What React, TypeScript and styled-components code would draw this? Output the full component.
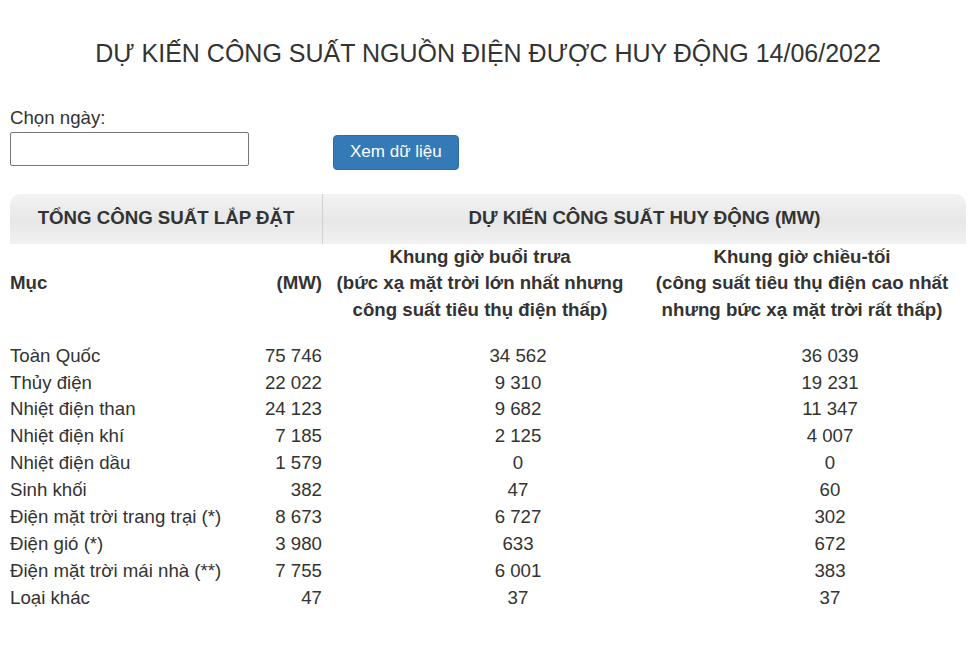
import styled, { createGlobalStyle } from 'styled-components';

const GlobalStyle = createGlobalStyle`
  body {
    margin: 0;
    background: #fff;
    color: #333;
    font-family: "Liberation Sans", Arial, sans-serif;
    font-size: 18.67px;
    line-height: 1.428571;
  }
`;

const Page = styled.div`
  width: 956px;
  margin-left: 10px;
`;

const Title = styled.h1`
  margin: 40px 0 37px;
  font-size: 25px;
  font-weight: normal;
  line-height: 1.1;
  text-align: center;
  color: #333;
`;

const FilterRow = styled.div`
  display: flex;
  align-items: flex-start;
  gap: 84px;
`;

const Field = styled.div`
  display: flex;
  flex-direction: column;
`;

const Label = styled.label`
  display: block;
  margin-bottom: 1px;
`;

const DateInput = styled.input`
  box-sizing: border-box;
  width: 239px;
  height: 34px;
  margin: 0;
  border: 1px solid #767676;
  border-radius: 2px;
  font: inherit;
`;

const Button = styled.button`
  box-sizing: border-box;
  margin-top: 30px;
  height: 35px;
  padding: 0 16px;
  border: 1px solid #2e6da4;
  border-radius: 4px;
  background: #337ab7;
  color: #fff;
  font-family: inherit;
  font-size: 17px;
  cursor: pointer;
`;

const Table = styled.div`
  margin-top: 24px;
`;

const TopHead = styled.div`
  display: grid;
  grid-template-columns: 312px 1fr;
  height: 50px;
  border-radius: 10px 10px 0 0;
  background: linear-gradient(#f3f3f3, #e7e7e7 55%, #f1f1f1);
  font-weight: bold;
`;

const TopCell = styled.div<{ $divider?: boolean }>`
  display: flex;
  align-items: center;
  justify-content: center;
  border-left: ${p => (p.$divider ? '1px solid #d0d0d0' : 'none')};
`;

const SubHead = styled.div`
  display: grid;
  grid-template-columns: 240px 72px 316px 328px;
  align-items: center;
  padding-bottom: 19px;
  font-weight: bold;
`;

const Row = styled.div`
  display: grid;
  grid-template-columns: 240px 72px 392px 232px;
  height: 26.9px;
  align-items: center;
`;

const Cell = styled.div<{ $align?: 'left' | 'right' | 'center' }>`
  text-align: ${p => p.$align ?? 'left'};
  white-space: nowrap;
`;

const rows: [string, string, string, string][] = [
  ['Toàn Quốc', '75 746', '34 562', '36 039'],
  ['Thủy điện', '22 022', '9 310', '19 231'],
  ['Nhiệt điện than', '24 123', '9 682', '11 347'],
  ['Nhiệt điện khí', '7 185', '2 125', '4 007'],
  ['Nhiệt điện dầu', '1 579', '0', '0'],
  ['Sinh khối', '382', '47', '60'],
  ['Điện mặt trời trang trại (*)', '8 673', '6 727', '302'],
  ['Điện gió (*)', '3 980', '633', '672'],
  ['Điện mặt trời mái nhà (**)', '7 755', '6 001', '383'],
  ['Loại khác', '47', '37', '37'],
];

export default function App() {
  return (
    <Page>
      <GlobalStyle />
      <Title>DỰ KIẾN CÔNG SUẤT NGUỒN ĐIỆN ĐƯỢC HUY ĐỘNG 14/06/2022</Title>

      <FilterRow>
        <Field>
          <Label htmlFor="ngay">Chọn ngày:</Label>
          <DateInput id="ngay" type="text" />
        </Field>
        <Button>Xem dữ liệu</Button>
      </FilterRow>

      <Table>
        <TopHead>
          <TopCell>TỔNG CÔNG SUẤT LẮP ĐẶT</TopCell>
          <TopCell $divider>DỰ KIẾN CÔNG SUẤT HUY ĐỘNG (MW)</TopCell>
        </TopHead>
        <SubHead>
          <Cell>Mục</Cell>
          <Cell $align="right">(MW)</Cell>
          <Cell $align="center">
            Khung giờ buổi trưa<br />
            (bức xạ mặt trời lớn nhất nhưng<br />
            công suất tiêu thụ điện thấp)
          </Cell>
          <Cell $align="center">
            Khung giờ chiều-tối<br />
            (công suất tiêu thụ điện cao nhất<br />
            nhưng bức xạ mặt trời rất thấp)
          </Cell>
        </SubHead>
        {rows.map(r => (
          <Row key={r[0]}>
            <Cell>{r[0]}</Cell>
            <Cell $align="right">{r[1]}</Cell>
            <Cell $align="center">{r[2]}</Cell>
            <Cell $align="center">{r[3]}</Cell>
          </Row>
        ))}
      </Table>
    </Page>
  );
}
